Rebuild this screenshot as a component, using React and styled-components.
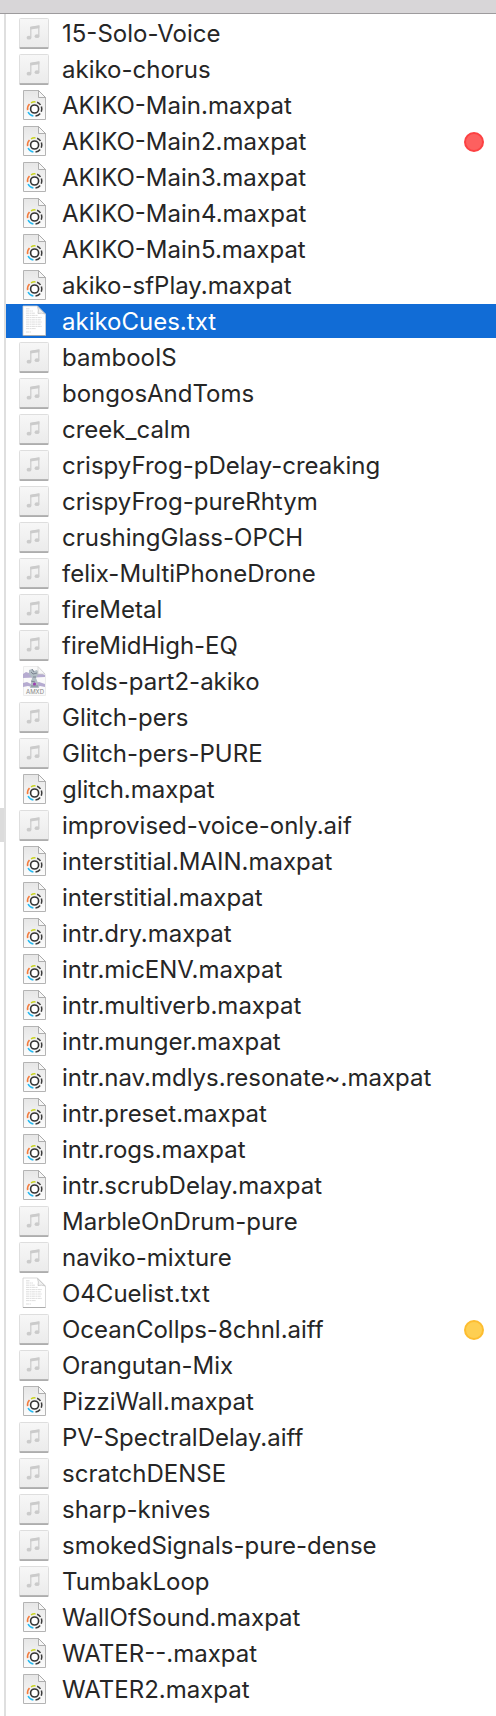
import React from "react";
import styled, { createGlobalStyle } from "styled-components";

const ROW = 36;

const GlobalStyle = createGlobalStyle`
  * { box-sizing: border-box; }
  body { margin: 0; background: #fff; }
`;

const Page = styled.main`
  display: flex;
  flex-direction: column;
  min-height: 100vh;
  font-family: Inter, "Liberation Sans", sans-serif;
  color: #262626;
`;

const HeaderBar = styled.header`
  height: 14px;
  background: #d8d6d8;
  border-bottom: 1px solid #9d9b9d;
`;

const Columns = styled.div`
  display: flex;
  flex: 1;
`;

const PreviousColumn = styled.div`
  display: grid;
  grid-template-rows: repeat(auto-fill, ${ROW}px);
  width: 6px;
  padding-top: 1px;
  border-right: 2px solid #dfdfdf;
`;

const ParentSelection = styled.div`
  grid-row: 23;
  margin: 1px 0;
  background: #dcdcdc;
`;

const FileList = styled.ul`
  flex: 1;
  min-width: 0;
  margin: 0;
  padding: 1px 0 8px;
  list-style: none;
`;

const FileRow = styled.li`
  display: flex;
  align-items: center;
  gap: 12px;
  height: ${ROW}px;
  padding: 0 12px;
  border: solid #fff;
  border-width: 1px 0;
  background: ${(p) => (p.$selected ? "#116cd6" : "#fff")};
  color: ${(p) => (p.$selected ? "#fff" : "inherit")};
`;

const Icon = styled.svg`
  flex: none;
  width: 32px;
  height: 32px;
`;

const FileName = styled.span`
  flex: 1;
  padding-top: 2px;
  font-size: 24px;
  line-height: 32px;
  white-space: nowrap;
`;

const Tag = styled.span`
  width: 20px;
  height: 20px;
  margin-top: 2px;
  border: 2px solid ${(p) => (p.$tone === "red" ? "#fc4142" : "#fdbd30")};
  border-radius: 50%;
  background: ${(p) => (p.$tone === "red" ? "#fd605f" : "#fecf52")};
`;

const PAGE = "M5.5 1.5H20.5L27.5 8.5V30.5H5.5Z";

function AudioIcon() {
  return (
    <Icon viewBox="0 0 32 32" aria-hidden="true">
      <rect x="1" y="3" width="30" height="29" rx="1.5" fill="#cfcfcf" />
      <rect x="1.5" y="1.5" width="29" height="29" rx="1" fill="url(#tile)" stroke="#dedede" />
      <path d="M2 31H30" stroke="#8c8c8c" />
      <path d="M12.8 20.5V10.2L20.8 9V19" fill="none" stroke="#cbcbcb" strokeWidth="1.2" />
      <path d="M12.2 10L21.4 8.6V11.2L12.2 12.6Z" fill="#cbcbcb" />
      <ellipse cx="11" cy="20.7" rx="2.4" ry="1.9" fill="#cbcbcb" />
      <ellipse cx="19" cy="19.2" rx="2.4" ry="1.9" fill="#cbcbcb" />
    </Icon>
  );
}

function PatchIcon() {
  return (
    <Icon viewBox="0 0 32 32" aria-hidden="true">
      <path d={PAGE} fill="url(#sheet)" stroke="#b4b4b4" />
      <path d="M20.5 1.5V8.5H27.5Z" fill="#f7f7f7" stroke="#a6a6a6" strokeWidth=".9" />
      <circle cx="16.6" cy="20" r="4" fill="#fff" stroke="#333" strokeWidth="1.6" />
      <g fill="none" strokeWidth="1.5" transform="translate(.3 0)">
        <path d="M12.7 13.8A7.2 7.2 0 0 1 17.2 12.9" stroke="#c9d420" />
        <path d="M9.3 21.2A7.2 7.2 0 0 1 11.2 14.9" stroke="#f47b3c" />
        <path d="M15.1 27.1A7.2 7.2 0 0 1 9.8 23" stroke="#27b9ef" />
        <path d="M18.8 13.3A7.2 7.2 0 0 1 22.2 15.9" stroke="#3b3b3b" />
        <path d="M23.1 17.6A7.2 7.2 0 0 1 23 22.7" stroke="#3b3b3b" />
        <path d="M21.9 24.5A7.2 7.2 0 0 1 17.2 27.1" stroke="#3b3b3b" />
      </g>
    </Icon>
  );
}

function TextIcon() {
  return (
    <Icon viewBox="0 0 32 32" aria-hidden="true">
      <path d="M5 1H19.5L27.5 9V30.5H5Z" fill="#fff" stroke="#cfcfcf" strokeWidth=".8" />
      <path d="M5 30.5H27.5" stroke="#a8a8a8" strokeWidth=".9" />
      <path d="M19.5 1.5Q21 5 20 8.5Q24 7.5 27 9Z" fill="#f2f2f2" stroke="#c4c4c4" strokeWidth=".8" />
      <g stroke="#d4d4d4" strokeWidth=".8" strokeDasharray="3 .5 2 .4">
        <path d="M8 3.8H12M8 6H15M8 8.2H17M8 10.4H20M8 12.6H24M8 14.8H23M8 17H24M8 19.2H23M8 21.4H24M8 23.6H18M8 27H13" />
      </g>
    </Icon>
  );
}

function DeviceIcon() {
  return (
    <Icon viewBox="0 0 32 32" aria-hidden="true">
      <path d="M5.5 1.5H19.5L27.5 9.5V30.5H5.5Z" fill="#fafafa" stroke="#ececec" />
      <path d="M5 9L8 7L11 8L14 6L22 8L27 10V12L5 13ZM5 18L9 17L13 19L21 17L27 19V22L22 21L18 23L10 21L5 22Z" fill="#b5abd0" />
      <path d="M11 5L14 4L16 6L19 5L21 8L18 13L20 18L21 23H12L13 18L14 13L11 9Z" fill="#b2bdc4" />
      <path d="M13 7L15 9L19 8M15 12H18M13 16L17 17M13 21H20M14 4L16 7" fill="none" stroke="#7d8592" strokeWidth="1" />
      <circle cx="16.5" cy="19" r="1.6" fill="#9c3fb0" />
      <path d="M20 1.5V9H27Z" fill="#f8f8f8" stroke="#ccc" strokeWidth=".7" />
      <text x="8" y="29" fontSize="6" fill="#888">AMXD</text>
    </Icon>
  );
}

const ICONS = { audio: AudioIcon, patch: PatchIcon, text: TextIcon, device: DeviceIcon };

const NAMES = [
  "15-Solo-Voice", "akiko-chorus", "AKIKO-Main.maxpat", "AKIKO-Main2.maxpat",
  "AKIKO-Main3.maxpat", "AKIKO-Main4.maxpat", "AKIKO-Main5.maxpat", "akiko-sfPlay.maxpat",
  "akikoCues.txt", "bambooIS", "bongosAndToms", "creek_calm",
  "crispyFrog-pDelay-creaking", "crispyFrog-pureRhtym", "crushingGlass-OPCH",
  "felix-MultiPhoneDrone", "fireMetal", "fireMidHigh-EQ", "folds-part2-akiko",
  "Glitch-pers", "Glitch-pers-PURE", "glitch.maxpat", "improvised-voice-only.aif",
  "interstitial.MAIN.maxpat", "interstitial.maxpat", "intr.dry.maxpat",
  "intr.micENV.maxpat", "intr.multiverb.maxpat", "intr.munger.maxpat",
  "intr.nav.mdlys.resonate~.maxpat", "intr.preset.maxpat", "intr.rogs.maxpat",
  "intr.scrubDelay.maxpat", "MarbleOnDrum-pure", "naviko-mixture", "O4Cuelist.txt",
  "OceanCollps-8chnl.aiff", "Orangutan-Mix", "PizziWall.maxpat", "PV-SpectralDelay.aiff",
  "scratchDENSE", "sharp-knives", "smokedSignals-pure-dense", "TumbakLoop",
  "WallOfSound.maxpat", "WATER--.maxpat", "WATER2.maxpat",
];

const TAGS = { "AKIKO-Main2.maxpat": "red", "OceanCollps-8chnl.aiff": "yellow" };

function kindOf(name) {
  if (name.endsWith(".maxpat")) return "patch";
  if (name.endsWith(".txt")) return "text";
  if (name === "folds-part2-akiko") return "device";
  return "audio";
}

const Gradients = styled.svg`
  display: block;
  width: 0;
  height: 0;
`;

export default function App() {
  return (
    <Page>
      <GlobalStyle />
      <Gradients aria-hidden="true">
        <defs>
          <linearGradient id="tile" x1="0" y1="0" x2="0" y2="1">
            <stop offset="0" stopColor="#f7f7f7" />
            <stop offset="1" stopColor="#ebebeb" />
          </linearGradient>
          <linearGradient id="sheet" x1="0" y1="0" x2="0" y2="1">
            <stop offset="0" stopColor="#e6e6e6" />
            <stop offset="1" stopColor="#fcfcfc" />
          </linearGradient>
        </defs>
      </Gradients>
      <HeaderBar />
      <Columns>
        <PreviousColumn>
          <ParentSelection />
        </PreviousColumn>
        <FileList aria-label="Files">
          {NAMES.map((name) => {
            const KindIcon = ICONS[kindOf(name)];
            return (
              <FileRow key={name} $selected={name === "akikoCues.txt"}>
                <KindIcon />
                <FileName>{name}</FileName>
                {TAGS[name] && <Tag $tone={TAGS[name]} role="img" aria-label={`${TAGS[name]} tag`} />}
              </FileRow>
            );
          })}
        </FileList>
      </Columns>
    </Page>
  );
}
